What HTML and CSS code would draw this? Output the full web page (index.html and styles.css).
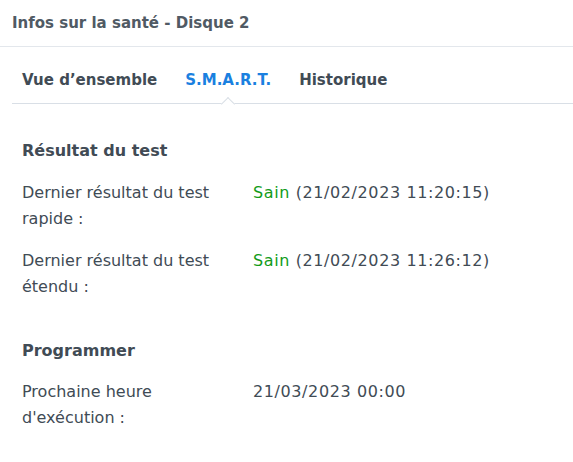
FILE: index.html
```html
<!DOCTYPE html>
<html lang="fr">
<head>
    <meta charset="UTF-8">
    <title>Infos sur la santé - Disque 2</title>
    <link rel="stylesheet" href="styles.css">
</head>
<body>
    <div class="header">Infos sur la santé - Disque 2</div>

    <div class="tabs">
        <div class="tab">Vue d’ensemble</div>
        <div class="tab active">S.M.A.R.T.</div>
        <div class="tab">Historique</div>
    </div>

    <div class="content">
        <h2>Résultat du test</h2>
        <div class="row">
            <div class="label">Dernier résultat du test rapide :</div>
            <div class="value"><span class="ok">Sain</span> (21/02/2023 11:20:15)</div>
        </div>
        <div class="row">
            <div class="label">Dernier résultat du test étendu :</div>
            <div class="value"><span class="ok">Sain</span> (21/02/2023 11:26:12)</div>
        </div>

        <h2 class="second">Programmer</h2>
        <div class="row">
            <div class="label">Prochaine heure d'exécution :</div>
            <div class="value">21/03/2023 00:00</div>
        </div>
    </div>
</body>
</html>
```

FILE: styles.css
```css
body {
    font-family: "DejaVu Sans", Verdana, sans-serif;
    margin: 0;
    padding: 0;
    background-color: #fff;
    color: #414b55;
}

.header {
    height: 46px;
    line-height: 46px;
    padding-left: 12px;
    font-size: 15px;
    font-weight: bold;
    color: #505a64;
    border-bottom: 1px solid #e3e7ec;
}

.tabs {
    display: flex;
    margin-left: 12px;
    padding-left: 10px;
    height: 56px;
    border-bottom: 1px solid #d9dfe6;
}

.tab {
    position: relative;
    padding-top: 24px;
    margin-right: 28px;
    font-size: 15px;
    font-weight: bold;
    color: #414b55;
}

.tab.active {
    color: #1a80e0;
}

.tab.active::after {
    content: "";
    position: absolute;
    left: 50%;
    bottom: -6px;
    width: 9px;
    height: 9px;
    margin-left: -5px;
    background: #fff;
    border-left: 1px solid #d9dfe6;
    border-top: 1px solid #d9dfe6;
    transform: rotate(45deg);
}

.content {
    padding: 35px 22px 0;
}

h2 {
    margin: 0 0 17px;
    font-size: 16px;
    font-weight: bold;
    line-height: 24px;
}

h2.second {
    margin-top: 39px;
    margin-bottom: 16px;
}

.row {
    display: flex;
    font-size: 16px;
    line-height: 26px;
    margin-bottom: 16px;
}

.label {
    width: 205px;
    margin-right: 26px;
}

.value {
    letter-spacing: 0.6px;
}

.ok {
    color: #129b19;
}
```
